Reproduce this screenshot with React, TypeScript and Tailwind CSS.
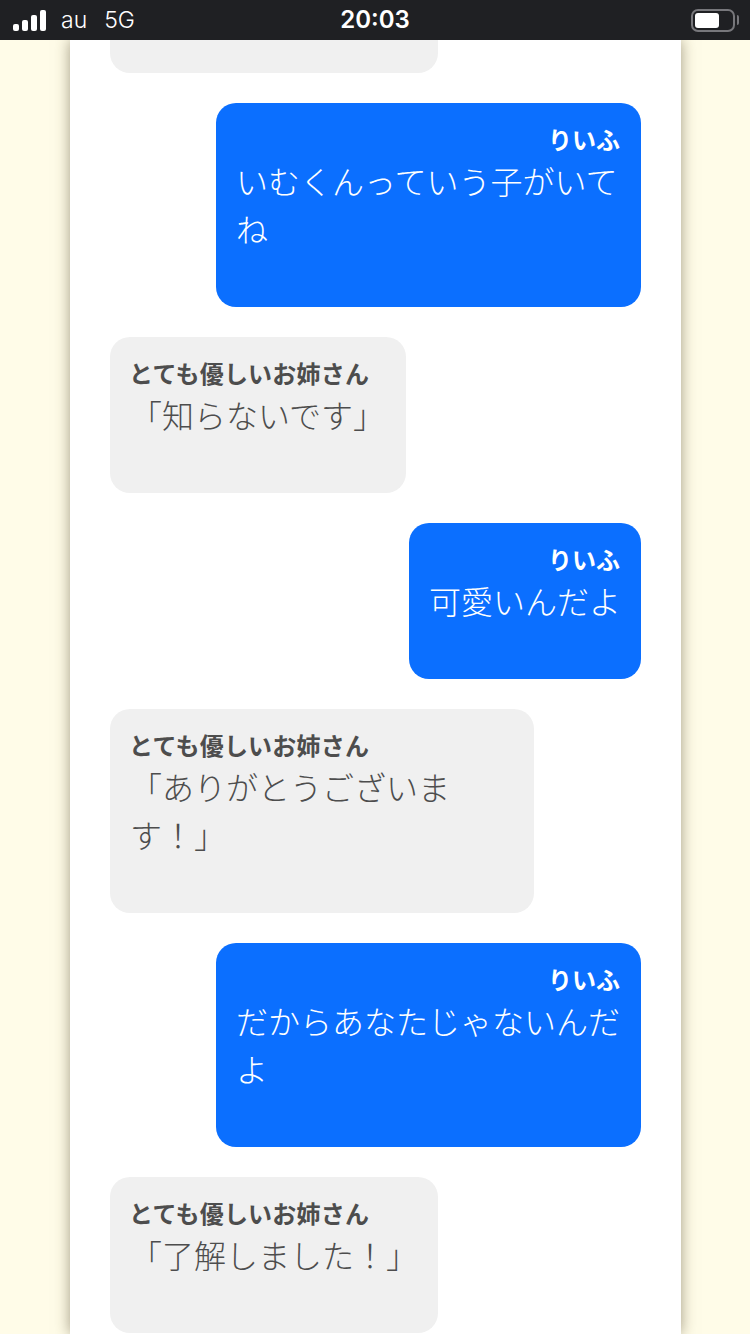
import { ReactNode } from 'react';

const font = "font-['Inter','Noto_Sans_CJK_JP',sans-serif]";

function Bubble({ me, width, height, name, children }: { me?: boolean; width: string; height: string; name: string; children: ReactNode }) {
  return (
    <div className={`flex ${me ? 'justify-end' : 'justify-start'}`}>
      <div className={`${width} ${height} rounded-[20px] px-5 pt-[23px] ${me ? 'bg-[#0b6fff] text-white' : 'bg-[#f0f0f0] text-[#4d4d4d]'}`}>
        <div className={`text-[24px] leading-[30px] font-bold ${me ? 'text-right pr-px' : 'text-left -ml-px tracking-[0.2px]'}`}>{name}</div>
        <div className="text-[32px] leading-[48px] mt-[3px] font-light">{children}</div>
      </div>
    </div>
  );
}

function StatusBar() {
  return (
    <div className="h-10 shrink-0 bg-[#1f2023] text-white flex items-center justify-between relative pl-[13px] pr-[11px]">
      <div className="flex items-center gap-[15px]">
        <div className="flex items-end gap-[3px] h-[21px]">
          <div className="w-[6px] h-[7px] bg-white rounded-[2px]" />
          <div className="w-[6px] h-[11px] bg-white rounded-[2px]" />
          <div className="w-[6px] h-[16px] bg-white rounded-[2px]" />
          <div className="w-[6px] h-[21px] bg-white rounded-[2px]" />
        </div>
        <div className="text-[23px] leading-none flex gap-[17px] font-light"><span>au</span><span>5G</span></div>
      </div>
      <div className="absolute left-0 right-0 text-center text-[24px] font-semibold leading-none">20:03</div>
      <div className="flex items-center gap-[2px]">
        <div className="w-[44px] h-[23px] rounded-[7px] border-2 border-[#77777b] p-[2px]">
          <div className="w-[24px] h-full bg-white rounded-[3px]" />
        </div>
        <div className="w-[2px] h-[10px] bg-[#77777b] rounded-r-sm" />
      </div>
    </div>
  );
}

export default function App() {
  return (
    <div className={`${font} w-[750px] h-[1334px] overflow-hidden flex flex-col bg-[#fffce8]`}>
      <StatusBar />
      <div className="flex-1 min-h-0 w-[611px] ml-[70px] bg-white shadow-[0_0_14px_rgba(70,60,30,0.5)] px-10 overflow-hidden">
        <div className="h-[33px] w-[328px] bg-[#f0f0f0] rounded-b-[20px]" />
        <div className="flex flex-col gap-[30px] mt-[30px]">
          <Bubble me width="w-[425px]" height="h-[204px]" name="りいふ">いむくんっていう子がいてね</Bubble>
          <Bubble width="w-[296px]" height="h-[156px]" name="とても優しいお姉さん">「知らないです」</Bubble>
          <Bubble me width="w-[232px]" height="h-[156px]" name="りいふ">可愛いんだよ</Bubble>
          <Bubble width="w-[424px]" height="h-[204px]" name="とても優しいお姉さん">「ありがとうございます！」</Bubble>
          <Bubble me width="w-[425px]" height="h-[204px]" name="りいふ">だからあなたじゃないんだよ</Bubble>
          <Bubble width="w-[328px]" height="h-[156px]" name="とても優しいお姉さん">「了解しました！」</Bubble>
        </div>
      </div>
    </div>
  );
}
